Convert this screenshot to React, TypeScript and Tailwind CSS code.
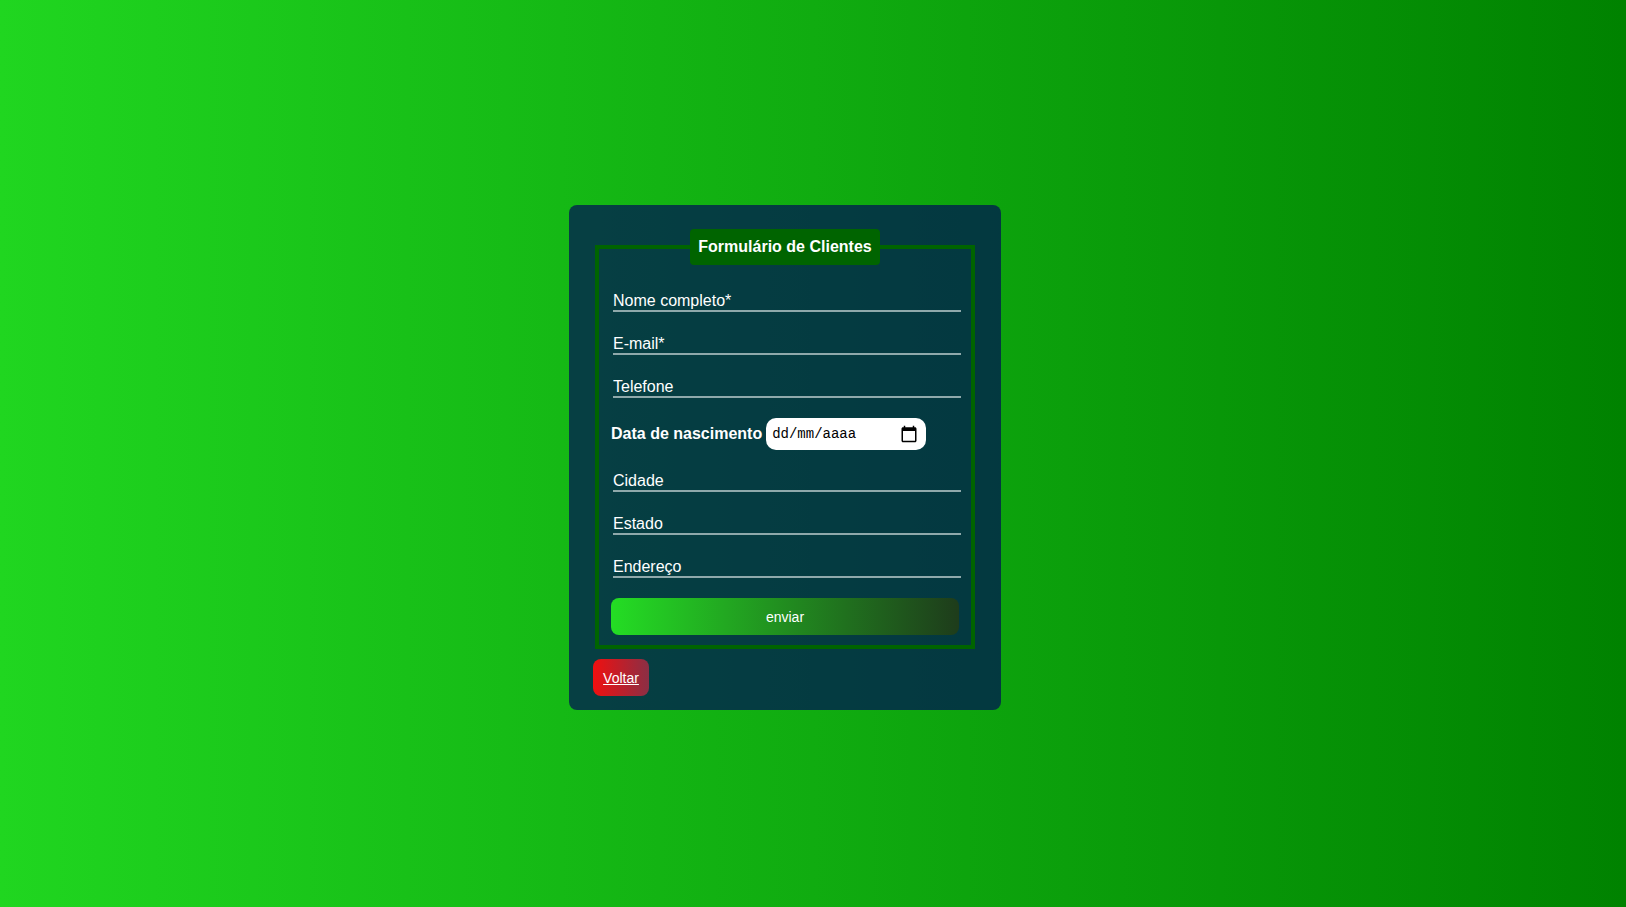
import React from "react";

const personalFields = [
  { id: "nome", label: "Nome completo*", type: "text" },
  { id: "email", label: "E-mail*", type: "email" },
  { id: "telefone", label: "Telefone", type: "tel" },
];

const addressFields = [
  { id: "cidade", label: "Cidade", type: "text" },
  { id: "estado", label: "Estado", type: "text" },
  { id: "endereco", label: "Endereço", type: "text" },
];

type FieldProps = { id: string; label: string; type: string };

function Field({ id, label, type }: FieldProps) {
  return (
    <input
      id={id}
      name={id}
      type={type}
      aria-label={label}
      placeholder={label}
      className="ml-0.5 block h-[22px] w-full border-b-2 border-[#8fa9ab] bg-transparent pt-0.5 text-base leading-5 text-white outline-none placeholder:text-white placeholder:opacity-100"
    />
  );
}

function FieldGroup({ fields }: { fields: FieldProps[] }) {
  return (
    <div className="flex flex-col gap-[21px]">
      {fields.map((f) => (
        <Field key={f.id} {...f} />
      ))}
    </div>
  );
}

function CalendarIcon() {
  return (
    <svg viewBox="0 0 24 24" className="size-[18px]" fill="black" aria-hidden="true">
      <path d="M20 3h-1V1h-2v2H7V1H5v2H4c-1.1 0-2 .9-2 2v16c0 1.1.9 2 2 2h16c1.1 0 2-.9 2-2V5c0-1.1-.9-2-2-2zm0 18H4V8h16v13z" />
    </svg>
  );
}

export default function App() {
  return (
    <main className="flex min-h-screen items-center justify-center bg-linear-to-r/srgb from-[#20d620] to-[#008200] pt-2 pr-14 font-['Liberation_Sans',Arial,sans-serif] text-white">
      <div className="w-full max-w-[432px] rounded-lg bg-[#000b57]/70 px-6 pt-6 pb-3.5">
        <form onSubmit={(e) => e.preventDefault()}>
          <fieldset className="mx-0.5 border-4 border-[#006400] px-3 pb-2.5">
            <legend className="mx-auto rounded bg-[#006400] px-2 py-1.5 text-base font-bold">
              Formulário de Clientes
            </legend>
            <div className="flex flex-col gap-5 pt-[25px]">
              <FieldGroup fields={personalFields} />
              <div className="flex items-center gap-1">
                <label htmlFor="nascimento" className="font-bold whitespace-nowrap">
                  Data de nascimento
                </label>
                <div className="flex h-8 w-40 items-center rounded-[10px] bg-white pr-2 pl-1.5">
                  <input
                    id="nascimento"
                    name="nascimento"
                    type="text"
                    placeholder="dd/mm/aaaa"
                    className="w-full min-w-0 bg-transparent font-['Liberation_Mono',monospace] text-sm text-black outline-none placeholder:text-black placeholder:opacity-100"
                  />
                  <button type="button" aria-label="Abrir calendário">
                    <CalendarIcon />
                  </button>
                </div>
              </div>
              <FieldGroup fields={addressFields} />
              <button
                type="submit"
                className="h-[37px] w-full rounded-lg bg-linear-to-r/srgb from-[#24dd24] to-[#1e3c1b] text-sm"
              >
                enviar
              </button>
            </div>
          </fieldset>
        </form>
        <a
          href="#"
          className="mt-2.5 flex h-[37px] w-14 items-center justify-center rounded-lg bg-linear-to-r/srgb from-[#f01010] to-[#8b2f45] text-sm underline"
        >
          Voltar
        </a>
      </div>
    </main>
  );
}
